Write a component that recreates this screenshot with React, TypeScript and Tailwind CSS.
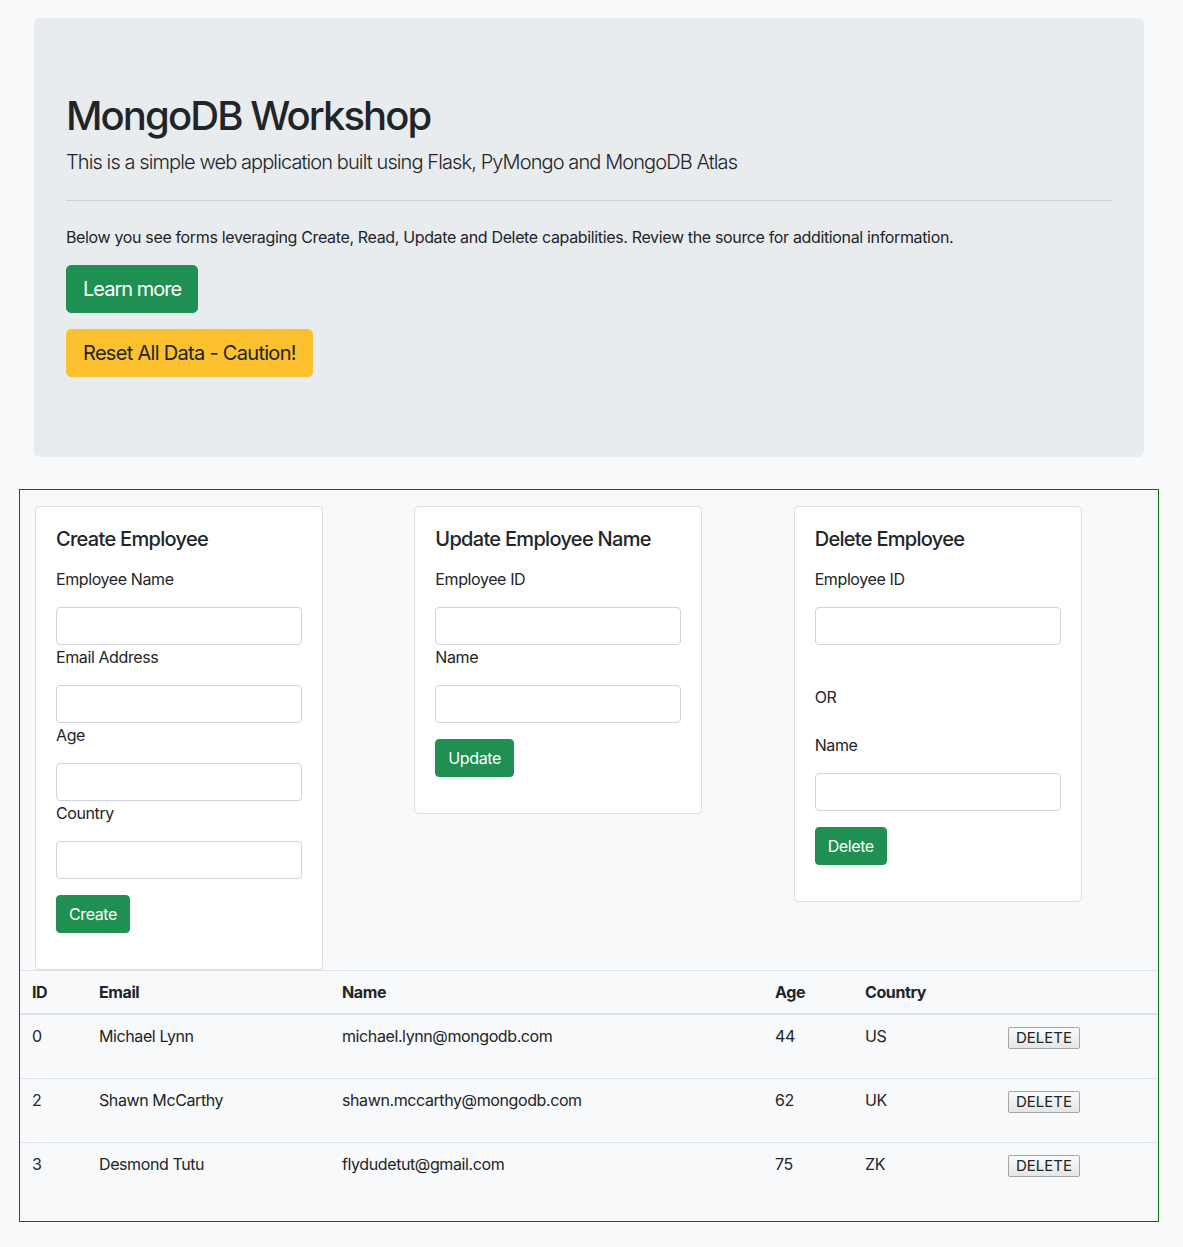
import React from 'react'

const employees = [
  { id: '0', email: 'Michael Lynn', name: 'michael.lynn@mongodb.com', age: '44', country: 'US' },
  { id: '2', email: 'Shawn McCarthy', name: 'shawn.mccarthy@mongodb.com', age: '62', country: 'UK' },
  { id: '3', email: 'Desmond Tutu', name: 'flydudetut@gmail.com', age: '75', country: 'ZK' },
]

function Field({ label }: { label: string }) {
  return (
    <div>
      <label className="block leading-6 mb-4">{label}</label>
      <input type="text" className="block w-full h-[38px] bg-white border border-[#ced4da] rounded-[4px] px-3" />
    </div>
  )
}

function GreenButton({ children }: { children: React.ReactNode }) {
  return (
    <button className="bg-[#1f8f52] text-white text-base leading-6 px-3 py-[6px] rounded-[4px] border border-[#1f8f52]">
      {children}
    </button>
  )
}

function Card({ title, children }: { title: string; children: React.ReactNode }) {
  return (
    <div className="w-[288px] bg-white border border-[#dcdee0] rounded-[4px] p-5">
      <h5 className="text-xl font-medium leading-6 mb-4 tracking-[-0.7px]">{title}</h5>
      {children}
    </div>
  )
}

export default function App() {
  return (
    <div className="min-h-[1247px] bg-[#f8f9fa] text-[#212529] font-[Inter,'Liberation_Sans',sans-serif] tracking-[-0.4px] pt-[18px] pb-6">
      <div className="ml-[34px] w-[1110px] bg-[#e9ecef] rounded-[6px] px-8 py-16">
        <h1 className="text-[40px] font-medium leading-[48px] tracking-[-1.9px] mb-[7px] mt-[10px]">MongoDB Workshop</h1>
        <p className="text-xl font-light leading-[30px] tracking-[-0.9px]">
          This is a simple web application built using Flask, PyMongo and MongoDB Atlas
        </p>
        <hr className="mt-[23px] mb-6 border-t border-[#cfd2d5]" />
        <p className="leading-6 mb-4 tracking-[-0.35px]">
          Below you see forms leveraging Create, Read, Update and Delete capabilities. Review the source for additional information.
        </p>
        <p className="mb-4">
          <button className="bg-[#1f8f52] border border-[#1f8f52] text-white text-xl leading-[30px] tracking-[-1px] px-4 py-2 rounded-[5px]">Learn more</button>
        </p>
        <p className="mb-4">
          <button className="bg-[#fdc02f] border border-[#fdc02f] text-[#212529] text-xl leading-[30px] tracking-[-0.7px] px-4 py-2 rounded-[5px]">Reset All Data - Caution!</button>
        </p>
      </div>

      <div className="ml-[19px] mt-8 w-[1140px] border border-[#0b6a0b] pb-[15px]">
        <div className="grid grid-cols-3 items-start pt-4">
          <div className="px-[15px]">
            <Card title="Create Employee">
              <Field label="Employee Name" />
              <Field label="Email Address" />
              <Field label="Age" />
              <Field label="Country" />
              <div className="mt-[16px] mb-4">
                <GreenButton>Create</GreenButton>
              </div>
            </Card>
          </div>
          <div className="px-[15px]">
            <Card title="Update Employee Name">
              <Field label="Employee ID" />
              <Field label="Name" />
              <div className="mt-[16px] mb-4">
                <GreenButton>Update</GreenButton>
              </div>
            </Card>
          </div>
          <div className="px-[15px]">
            <Card title="Delete Employee">
              <Field label="Employee ID" />
              <p className="leading-6 mt-[40px] mb-6">OR</p>
              <Field label="Name" />
              <div className="mt-[16px] mb-4">
                <GreenButton>Delete</GreenButton>
              </div>
            </Card>
          </div>
        </div>

        <table className="w-full table-fixed border-collapse text-left">
          <colgroup>
            <col className="w-[67px]" />
            <col className="w-[243px]" />
            <col className="w-[433px]" />
            <col className="w-[90px]" />
            <col className="w-[143px]" />
            <col />
          </colgroup>
          <thead>
            <tr className="border-t border-[#dee2e6] border-b-2 border-b-[#dee2e6]">
              {['ID', 'Email', 'Name', 'Age', 'Country', ''].map((h, i) => (
                <th key={i} className="font-bold leading-6 px-3 py-[9px]">{h}</th>
              ))}
            </tr>
          </thead>
          <tbody>
            {employees.map((e, i) => (
              <tr key={e.id} className={i < employees.length - 1 ? 'border-b border-[#dee2e6]' : ''}>
                <td className="align-top px-3 py-[9px] leading-6 h-[64px]">{e.id}</td>
                <td className="align-top px-3 py-[9px] leading-6">{e.email}</td>
                <td className="align-top px-3 py-[9px] leading-6">{e.name}</td>
                <td className="align-top px-3 py-[9px] leading-6">{e.age}</td>
                <td className="align-top px-3 py-[9px] leading-6">{e.country}</td>
                <td className="align-top px-3 py-[9px]">
                  <button className="mt-[3px] h-[22px] px-[7px] text-[15px] leading-5 tracking-normal border border-[#a6a6a6] rounded-[2px] bg-gradient-to-b from-[#fbfbfb] to-[#e5e5e5]">
                    DELETE
                  </button>
                </td>
              </tr>
            ))}
          </tbody>
        </table>
      </div>
    </div>
  )
}
